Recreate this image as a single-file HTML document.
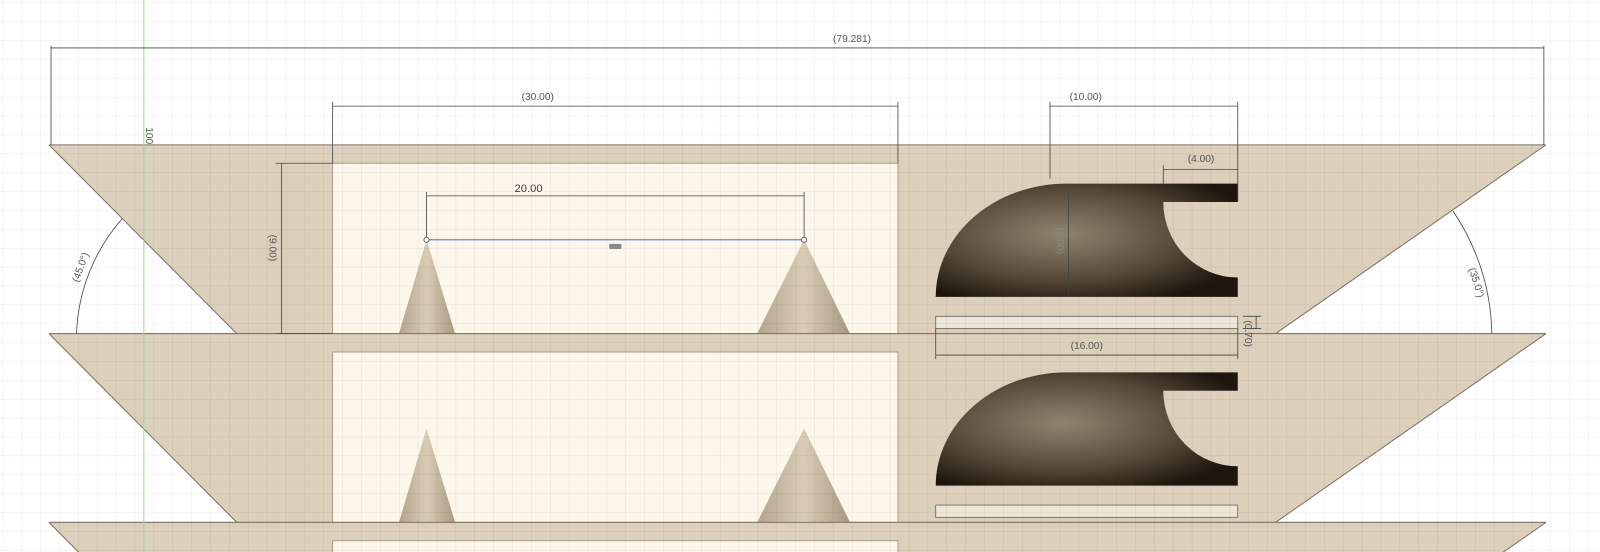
<!DOCTYPE html>
<html><head><meta charset="utf-8"><style>
html,body{margin:0;padding:0;background:#fff;overflow:hidden;width:1600px;height:552px}
svg{display:block}
text{font-family:"Liberation Sans",sans-serif;font-size:10px;fill:#555}
</style></head><body>
<svg width="1600" height="552" viewBox="0 0 1568 541" preserveAspectRatio="none" xmlns="http://www.w3.org/2000/svg">
<defs>
<pattern id="g" x="3" y="3" width="18.5" height="18.5" patternUnits="userSpaceOnUse">
<path d="M18.5 0V18.5M0 18.5H18.5" stroke="rgba(0,0,0,0.1)" stroke-width="0.8" fill="none"/>
</pattern>
<linearGradient id="cone" x1="0" x2="1">
<stop offset="0" stop-color="#b3a48c"/><stop offset="0.5" stop-color="#d9ccb6"/><stop offset="1" stop-color="#a89880"/>
</linearGradient>
<radialGradient id="dk" cx="0.42" cy="0.45" r="0.65">
<stop offset="0" stop-color="#8f8470"/><stop offset="0.6" stop-color="#57493a"/><stop offset="1" stop-color="#1e150d"/>
</radialGradient>
<g id="band">
<polygon points="48,142 1515,142 1250,327 232,327" fill="#dccfbc"/>
<rect x="326" y="160" width="554" height="167" fill="#fdf6ea"/>
<path d="M48 142L232 327M1515 142L1250 327M48 142H1515M48 327H1515" stroke="#7d7260" stroke-width="1" fill="none"/>
<rect x="326" y="160" width="554" height="167" fill="none" stroke="#9a8f7c" stroke-width="0.8"/>
<polygon points="418,235 391,327 446,327" fill="url(#cone)"/>
<polygon points="788,235 742,327 833,327" fill="url(#cone)"/>
<rect x="917" y="310" width="296" height="12" fill="#ece6da" stroke="#6d6252" stroke-width="0.8"/>
</g>
<path id="dark" d="M1045 180H1213V198H1140A73 74 0 0 0 1213 272V291H917A128 111 0 0 1 1045 180Z" fill="url(#dk)"/>
</defs>
<rect width="1568" height="541" fill="#fff"/>
<use href="#band"/>
<use href="#band" y="185"/>
<use href="#band" y="370"/>
<rect width="1568" height="541" fill="url(#g)"/>
<path d="M1045 180H1213V198H1140A73 74 0 0 0 1213 272V291H917A128 111 0 0 1 1045 180Z" fill="url(#dk)"/>
<path d="M1045 365H1213V383H1140A73 74 0 0 0 1213 457V476H917A128 111 0 0 1 1045 365Z" fill="url(#dk)"/>
<line x1="141" y1="0" x2="141" y2="541" stroke="#9ed49a" stroke-width="1"/>
<g stroke="#444" stroke-width="0.8" fill="none">
<path d="M50 47H1513M50 45V142M1513 45V142"/>
<path d="M326 104H880M326 100V160M880 100V160"/>
<path d="M1029 104H1213M1029 100V175M1213 100V198"/>
<path d="M1140 166H1213M1140 162V180"/>
<path d="M418 192H788M418 188V235M788 188V235"/>
<path d="M276 160V327M270 160H326M270 327H326"/>
<path d="M1047 180V291"/>
<path d="M917 348H1213M917 322V352M1213 322V352"/>
<path d="M1231 310V322M1218 310H1236M1218 322H1236"/>
<path d="M120 214A180 180 0 0 0 75 327"/>
<path d="M1424 207A220 220 0 0 1 1462 327"/>
</g>
<line x1="418" y1="235" x2="788" y2="235" stroke="#5b8fd6" stroke-width="1.2"/>
<circle cx="418" cy="235" r="2.5" fill="#fff" stroke="#666"/>
<circle cx="788" cy="235" r="2.5" fill="#fff" stroke="#666"/>
<rect x="597" y="239" width="12" height="5" fill="#888" rx="1"/>
<text x="835" y="41" text-anchor="middle">(79.281)</text>
<text x="527" y="98" text-anchor="middle">(30.00)</text>
<text x="1064" y="98" text-anchor="middle">(10.00)</text>
<text x="1177" y="159" text-anchor="middle">(4.00)</text>
<text x="518" y="188" text-anchor="middle" style="font-size:11px;fill:#444">20.00</text>
<text x="1065" y="342" text-anchor="middle">(16.00)</text>
<text transform="translate(264,243) rotate(90)" text-anchor="middle">(9.00)</text>
<text transform="translate(1036,236) rotate(90)" text-anchor="middle" style="fill:#888">(6.00)</text>
<text transform="translate(1220,327) rotate(90)" text-anchor="middle">(0.70)</text>
<text transform="translate(143,133) rotate(90)" text-anchor="middle">100</text>
<text transform="translate(82,263) rotate(-70)" text-anchor="middle">(45.0°)</text>
<text transform="translate(1444,278) rotate(72)" text-anchor="middle">(35.0°)</text>
</svg>
</body></html>
